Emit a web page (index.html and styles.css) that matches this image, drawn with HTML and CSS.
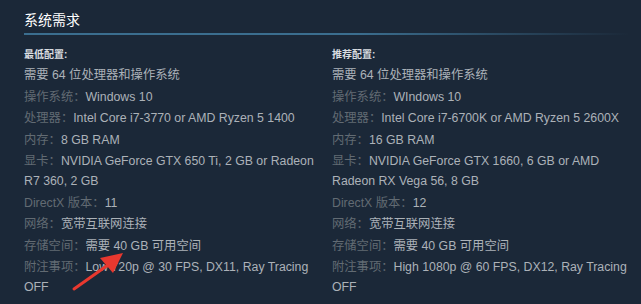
FILE: index.html
```html
<!DOCTYPE html>
<html lang="zh-CN">
<head>
<meta charset="utf-8">
<link rel="stylesheet" href="styles.css">
</head>
<body>
<div class="sysreq">
  <h2 class="title">系统需求</h2>
  <div class="cols">
    <div class="col">
      <div class="head">最低配置:</div>
      <ul>
        <li>需要 64 位处理器和操作系统</li>
        <li><span class="lbl">操作系统：</span>Windows 10</li>
        <li><span class="lbl">处理器：</span>Intel Core i7-3770 or AMD Ryzen 5 1400</li>
        <li><span class="lbl">内存：</span>8 GB RAM</li>
        <li><span class="lbl">显卡：</span>NVIDIA GeForce GTX 650 Ti, 2 GB or Radeon R7 360, 2 GB</li>
        <li><span class="lbl">DirectX 版本：</span>11</li>
        <li><span class="lbl">网络：</span>宽带互联网连接</li>
        <li><span class="lbl">存储空间：</span>需要 40 GB 可用空间</li>
        <li><span class="lbl">附注事项：</span>Low 720p @ 30 FPS, DX11, Ray Tracing OFF</li>
      </ul>
    </div>
    <div class="col">
      <div class="head">推荐配置:</div>
      <ul>
        <li>需要 64 位处理器和操作系统</li>
        <li><span class="lbl">操作系统：</span>WIndows 10</li>
        <li><span class="lbl">处理器：</span>Intel Core i7-6700K or AMD Ryzen 5 2600X</li>
        <li><span class="lbl">内存：</span>16 GB RAM</li>
        <li><span class="lbl">显卡：</span>NVIDIA GeForce GTX 1660, 6 GB or AMD Radeon RX Vega 56, 8 GB</li>
        <li><span class="lbl">DirectX 版本：</span>12</li>
        <li><span class="lbl">网络：</span>宽带互联网连接</li>
        <li><span class="lbl">存储空间：</span>需要 40 GB 可用空间</li>
        <li><span class="lbl">附注事项：</span>High 1080p @ 60 FPS, DX12, Ray Tracing OFF</li>
      </ul>
    </div>
  </div>
  <svg class="arrow" width="70" height="50" viewBox="0 0 70 50">
    <line x1="4" y1="43" x2="38" y2="19" stroke="#e8382f" stroke-width="3" stroke-linecap="round"/>
    <polygon points="53,7 30,12 43,27" fill="#e8382f"/>
  </svg>
</div>
</body>
</html>
```

FILE: styles.css
```css
html, body {
  margin: 0;
  padding: 0;
  background: #1b2838;
}
body {
  font-family: "Liberation Sans", Arial, "Noto Sans CJK SC", sans-serif;
  color: #acb2b8;
}
.sysreq {
  position: relative;
  padding: 10px 11px 0 24px;
}
.title {
  margin: 0;
  font-size: 14px;
  font-weight: normal;
  color: #ffffff;
  line-height: 20px;
  padding-bottom: 5px;
  border-bottom: 1px solid transparent;
  background-image: linear-gradient(to right, #3b6e8f 0%, #3b6e8f 55%, rgba(59,110,143,0) 100%);
  background-size: 100% 2px;
  background-repeat: no-repeat;
  background-position: left bottom;
}
.cols {
  display: flex;
  gap: 10px;
  margin-top: 12px;
}
.col {
  width: 298px;
}
.head {
  font-size: 10px;
  font-weight: bold;
  color: #d9dde1;
  line-height: 14px;
  margin-bottom: 3px;
}
ul {
  list-style: none;
  margin: 0;
  padding: 0;
}
li {
  font-size: 12.3px;
  line-height: 20px;
  margin-bottom: 1.5px;
}
.lbl {
  color: #626b73;
}
.arrow {
  position: absolute;
  left: 70px;
  top: 246px;
}
```
